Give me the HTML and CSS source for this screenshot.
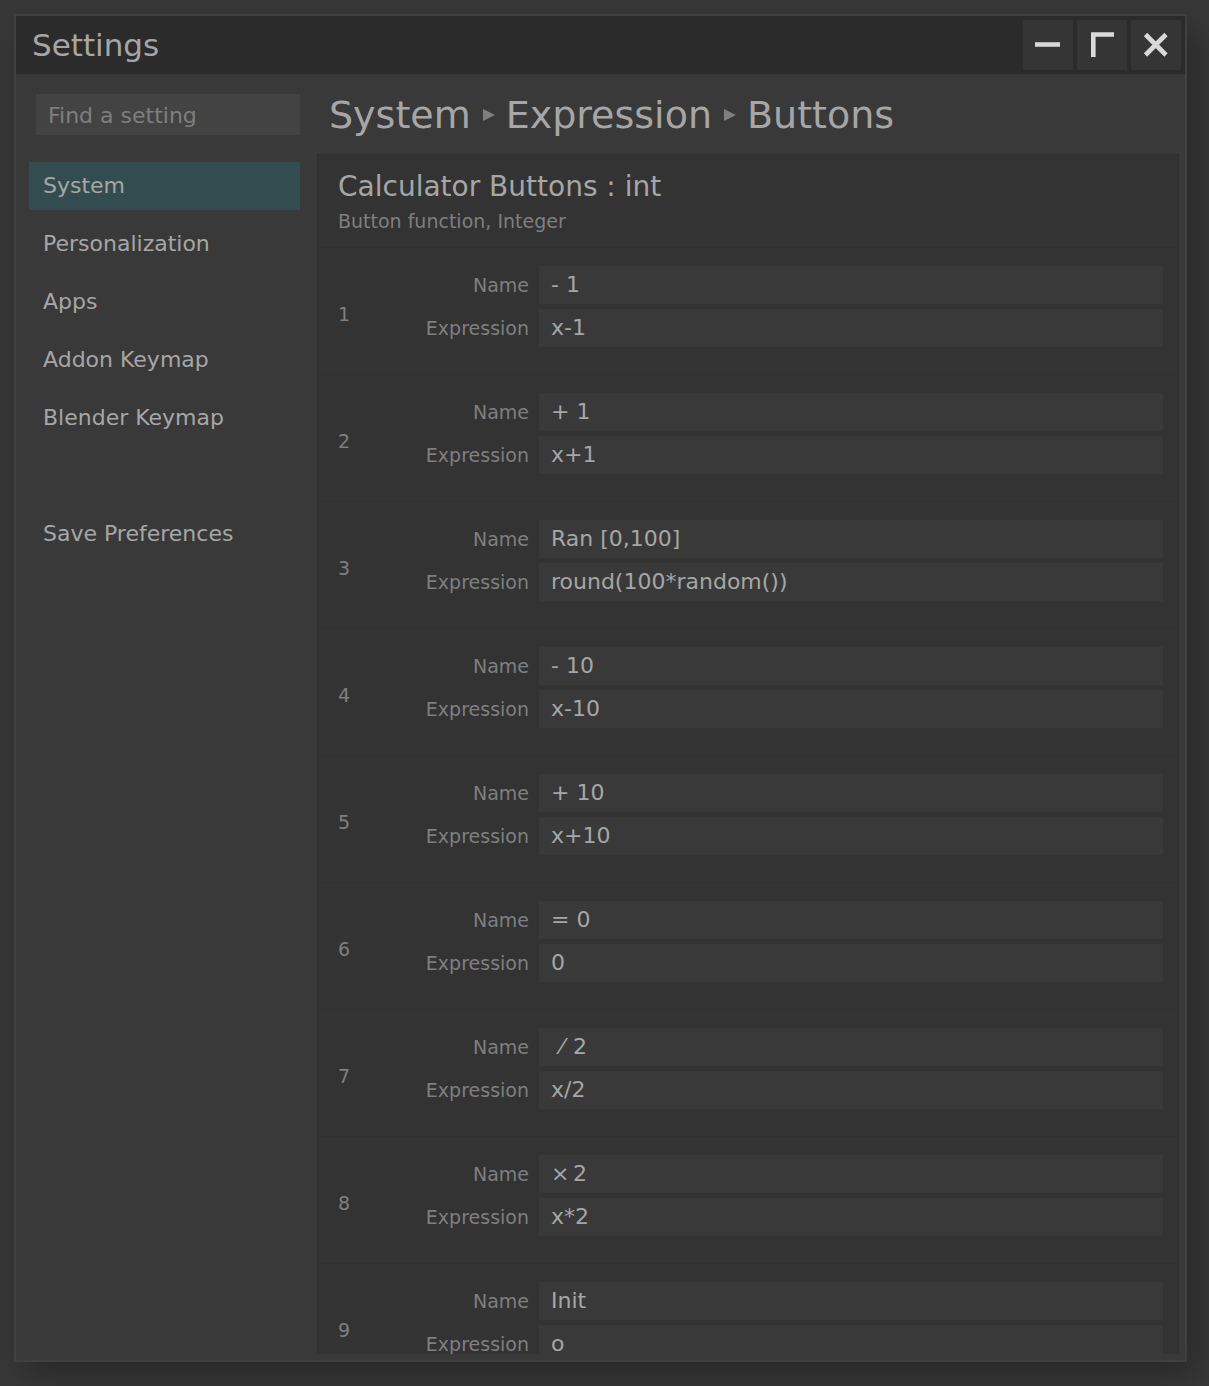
FILE: index.html
```html
<!DOCTYPE html>
<html lang="en">
<head>
<meta charset="utf-8">
<title>Settings</title>
<link rel="stylesheet" href="styles.css">
</head>
<body>
<div class="window">
  <header class="titlebar">
    <h1 class="title">Settings</h1>
    <div class="controls">
      <button type="button" class="control" aria-label="Minimize"><svg viewBox="0 0 50 50"><path d="M12 24.5H37"/></svg></button>
      <button type="button" class="control" aria-label="Maximize"><svg viewBox="0 0 50 50"><path d="M16.3 37V14.5H37"/></svg></button>
      <button type="button" class="control" aria-label="Close"><svg viewBox="0 0 50 50"><path d="M14.5 14.5L35 35M35 14.5L14.5 35"/></svg></button>
    </div>
  </header>
  <div class="content">
    <aside class="sidebar">
      <input class="search" type="text" placeholder="Find a setting" aria-label="Find a setting">
      <nav class="nav">
        <a class="nav-item active" href="#system">System</a>
        <a class="nav-item" href="#personalization">Personalization</a>
        <a class="nav-item" href="#apps">Apps</a>
        <a class="nav-item" href="#addon-keymap">Addon Keymap</a>
        <a class="nav-item" href="#blender-keymap">Blender Keymap</a>
        <a class="nav-item save" href="#save">Save Preferences</a>
      </nav>
    </aside>
    <main class="main">
      <nav class="breadcrumb" aria-label="Breadcrumb">
        <a href="#system">System</a>
        <svg class="arrow" viewBox="0 0 12 14"><path d="M0 1L12 7L0 13Z"/></svg>
        <a href="#expression">Expression</a>
        <svg class="arrow" viewBox="0 0 12 14"><path d="M0 1L12 7L0 13Z"/></svg>
        <a href="#buttons">Buttons</a>
      </nav>
      <section class="panel">
        <div class="panel-head">
          <h2 class="panel-title">Calculator Buttons : int</h2>
          <p class="panel-note">Button function, Integer</p>
        </div>
        <ol class="entries">
          <li class="entry"><span class="index">1</span><div class="fields"><label for="n1">Name</label><input id="n1" type="text" value="- 1"><label for="e1">Expression</label><input id="e1" type="text" value="x-1"></div></li>
          <li class="entry"><span class="index">2</span><div class="fields"><label for="n2">Name</label><input id="n2" type="text" value="+ 1"><label for="e2">Expression</label><input id="e2" type="text" value="x+1"></div></li>
          <li class="entry"><span class="index">3</span><div class="fields"><label for="n3">Name</label><input id="n3" type="text" value="Ran [0,100]"><label for="e3">Expression</label><input id="e3" type="text" value="round(100*random())"></div></li>
          <li class="entry"><span class="index">4</span><div class="fields"><label for="n4">Name</label><input id="n4" type="text" value="- 10"><label for="e4">Expression</label><input id="e4" type="text" value="x-10"></div></li>
          <li class="entry"><span class="index">5</span><div class="fields"><label for="n5">Name</label><input id="n5" type="text" value="+ 10"><label for="e5">Expression</label><input id="e5" type="text" value="x+10"></div></li>
          <li class="entry"><span class="index">6</span><div class="fields"><label for="n6">Name</label><input id="n6" type="text" value="= 0"><label for="e6">Expression</label><input id="e6" type="text" value="0"></div></li>
          <li class="entry"><span class="index">7</span><div class="fields"><label for="n7">Name</label><input id="n7" type="text" value=" &#x200A;⁄ &#x200A;2"><label for="e7">Expression</label><input id="e7" type="text" value="x/2"></div></li>
          <li class="entry"><span class="index">8</span><div class="fields"><label for="n8">Name</label><input id="n8" type="text" value="×&#x2006;2"><label for="e8">Expression</label><input id="e8" type="text" value="x*2"></div></li>
          <li class="entry"><span class="index">9</span><div class="fields"><label for="n9">Name</label><input id="n9" type="text" value="Init"><label for="e9">Expression</label><input id="e9" type="text" value="o"></div></li>
        </ol>
      </section>
    </main>
  </div>
</div>
</body>
</html>
```
FILE: styles.css
```css
* {
  box-sizing: border-box;
}

body {
  margin: 0;
  height: 100vh;
  padding: 14px 22px 24px 14px;
  display: flex;
  overflow: hidden;
  background: #383838;
  color: #a6a6a6;
  font-family: "DejaVu Sans", sans-serif;
  font-size: 22px;
}

h1, h2, p, ol {
  margin: 0;
  padding: 0;
  font-weight: 400;
}

a {
  color: inherit;
  text-decoration: none;
}

input {
  min-width: 0;
  border: 0;
  padding: 0 12px;
  font: inherit;
  color: inherit;
}

.window {
  flex: 1;
  min-width: 0;
  display: flex;
  flex-direction: column;
  border: 2px solid #404040;
  background: #393939;
  box-shadow: 10px 14px 36px rgba(0, 0, 0, 0.3);
}

.titlebar {
  display: flex;
  align-items: center;
  justify-content: space-between;
  padding: 4px 4px 4px 16px;
  background: #2b2b2b;
}

.title {
  font-size: 31px;
  line-height: 50px;
}

.controls {
  display: flex;
  gap: 4px;
}

.control {
  width: 50px;
  height: 50px;
  padding: 0;
  border: 0;
  background: #353535;
}

.control svg {
  display: block;
  fill: none;
  stroke: #d9d9d9;
  stroke-width: 4.6;
}

.content {
  flex: 1;
  min-height: 0;
  display: flex;
  gap: 17px;
  padding: 0 6px 6px 13px;
}

.sidebar {
  flex: none;
  width: 271px;
  padding-top: 20px;
}

.search {
  display: block;
  width: 264px;
  height: 41px;
  margin-left: 7px;
  padding-top: 2px;
  background: #434343;
}

.search::placeholder {
  color: #7f7f7f;
  opacity: 1;
}

.nav {
  display: flex;
  flex-direction: column;
  gap: 10px;
  margin-top: 27px;
}

.nav-item {
  padding: 0 14px;
  line-height: 48px;
}

.active {
  background: #334c50;
}

.save {
  margin-top: 58px;
}

.main {
  flex: 1;
  min-width: 0;
  display: flex;
  flex-direction: column;
}

.breadcrumb {
  display: flex;
  align-items: center;
  padding: 2px 0 0 12px;
  font-size: 38px;
  line-height: 78px;
}

.arrow {
  width: 12px;
  height: 14px;
  margin: 0 11px 0 12px;
  fill: #7f7f7f;
}

.panel {
  flex: 1;
  min-height: 0;
  overflow: hidden;
  border: solid #303030;
  border-width: 1px 1px 0;
  background: #333333;
}

.panel-head {
  padding: 12px 20px;
}

.panel-title {
  font-size: 28px;
  line-height: 40px;
}

.panel-note {
  color: #7f7f7f;
  font-size: 19px;
  line-height: 28px;
}

.entries {
  list-style: none;
}

.entry {
  display: flex;
  align-items: center;
  padding: 18px 15px 27px 20px;
  border-top: 1px solid #303030;
}

.index {
  width: 70px;
  padding-top: 14px;
  color: #7f7f7f;
  font-size: 19px;
}

.fields {
  flex: 1;
  display: grid;
  grid-template-columns: 121px 1fr;
  grid-auto-rows: 38px;
  gap: 5px 10px;
}

.fields label {
  color: #7f7f7f;
  font-size: 19px;
  line-height: 38px;
  text-align: right;
}

.fields input {
  padding-bottom: 2px;
  background: #393939;
}
```
